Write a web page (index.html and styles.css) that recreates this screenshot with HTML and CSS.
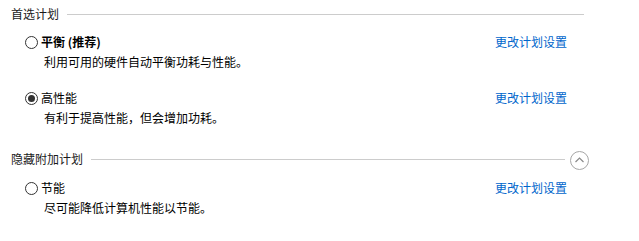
FILE: index.html
```html
<!DOCTYPE html>
<html lang="zh-CN">
<head>
    <meta charset="UTF-8">
    <title>电源计划</title>
    <link rel="stylesheet" href="styles.css">
</head>
<body>
    <div class="panel">
        <div class="section">
            <div class="section-head">
                <span class="section-title">首选计划</span>
                <span class="rule rule-end"></span>
            </div>

            <div class="plan">
                <div class="plan-main">
                    <div class="plan-title">
                        <span class="radio"></span>
                        <span class="plan-name bold">平衡 (推荐)</span>
                    </div>
                    <div class="plan-desc">利用可用的硬件自动平衡功耗与性能。</div>
                </div>
                <a class="plan-link" href="#">更改计划设置</a>
            </div>

            <div class="plan">
                <div class="plan-main">
                    <div class="plan-title">
                        <span class="radio checked"></span>
                        <span class="plan-name">高性能</span>
                    </div>
                    <div class="plan-desc">有利于提高性能，但会增加功耗。</div>
                </div>
                <a class="plan-link" href="#">更改计划设置</a>
            </div>
        </div>

        <div class="section extra">
            <div class="section-head">
                <span class="section-title">隐藏附加计划</span>
                <span class="rule"></span>
                <svg class="toggle" width="19" height="19" viewBox="0 0 19 19">
                    <circle cx="9.5" cy="9.5" r="9" fill="none" stroke="#a6a6a6" stroke-width="1"/>
                    <polyline points="5.5,11 9.5,7 13.5,11" fill="none" stroke="#8a8a8a" stroke-width="1.2"/>
                </svg>
            </div>

            <div class="plan">
                <div class="plan-main">
                    <div class="plan-title">
                        <span class="radio"></span>
                        <span class="plan-name">节能</span>
                    </div>
                    <div class="plan-desc">尽可能降低计算机性能以节能。</div>
                </div>
                <a class="plan-link" href="#">更改计划设置</a>
            </div>
        </div>
    </div>
</body>
</html>
```

FILE: styles.css
```css
body {
    margin: 0;
    background: #fff;
    color: #000;
    font-family: "Noto Sans CJK SC", "Microsoft YaHei", sans-serif;
    font-size: 12px;
    line-height: 16px;
}

.panel {
    padding: 6px 50px 0 11px;
}

.section + .section {
    margin-top: 25px;
}

.section-head {
    display: flex;
    align-items: center;
    height: 16px;
    margin-bottom: 12px;
    color: #1a1a1a;
}

.extra .section-head {
    margin-bottom: 13px;
}

.rule {
    flex: 1;
    height: 0;
    border-top: 1px solid #cccccc;
    margin-left: 8px;
}

.rule-end {
    margin-right: 5px;
}

.toggle {
    display: block;
    margin-left: 5px;
    margin-top: 2px;
}

.plan {
    display: flex;
    justify-content: space-between;
    align-items: flex-start;
    padding: 0 22px 0 14px;
}

.plan + .plan {
    margin-top: 20px;
}

.plan-title {
    display: flex;
    align-items: center;
    height: 16px;
}

.radio {
    position: relative;
    width: 13px;
    height: 13px;
    box-sizing: border-box;
    border: 1px solid #333;
    border-radius: 50%;
    background: #fff;
    margin-right: 3px;
}

.radio.checked::after {
    content: "";
    position: absolute;
    left: 2px;
    top: 2px;
    width: 7px;
    height: 7px;
    border-radius: 50%;
    background: #333;
}

.bold {
    font-weight: 700;
}

.plan-desc {
    margin-top: 4px;
    padding-left: 19px;
}

.plan-link {
    color: #0066cc;
    text-decoration: none;
}
```
